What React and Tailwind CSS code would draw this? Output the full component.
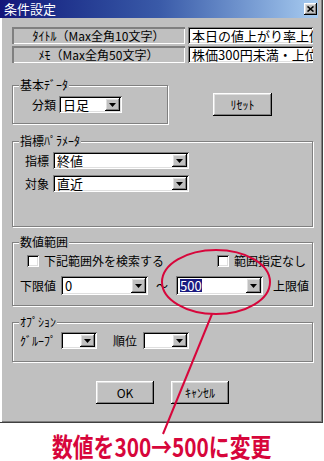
import React from "react";

const sunken =
  "shadow-[inset_1px_1px_0_#808080,inset_-1px_-1px_0_#ffffff,inset_2px_2px_0_#000000,inset_-2px_-2px_0_#dfdfdf]";
const raised =
  "shadow-[inset_-1px_-1px_0_#000000,inset_1px_1px_0_#ffffff,inset_-2px_-2px_0_#808080,inset_2px_2px_0_#dfdfdf]";

function Arrow() {
  return (
    <svg width="7" height="4" viewBox="0 0 7 4">
      <polygon points="0,0 7,0 3.5,4" fill="#000" />
    </svg>
  );
}

function Combo({ w, h = "h-[17px]", children }) {
  return (
    <div className={`flex ${w} ${h} bg-white ${sunken} p-[2px]`}>
      <div className="flex-1 flex items-center whitespace-nowrap pl-[2px] text-[13px] leading-[13px]">
        {children}
      </div>
      <div className={`w-[15px] bg-[#c0c0c0] ${raised} flex items-center justify-center`}>
        <Arrow />
      </div>
    </div>
  );
}

function Group({ label, className, children }) {
  return (
    <div
      className={`relative border border-[#808080] shadow-[inset_1px_1px_0_#ffffff,1px_1px_0_#ffffff] ${className}`}
    >
      <span className="absolute -top-[8px] left-[6px] bg-[#c0c0c0] px-[1px] text-[12px] leading-[14px]">
        {label}
      </span>
      {children}
    </div>
  );
}

function Button({ w, children }) {
  return (
    <div
      className={`${w} h-[23px] ${raised} flex items-center justify-center text-[12px]`}
    >
      {children}
    </div>
  );
}

function Check({ label, className }) {
  return (
    <div className={`flex items-center ${className}`}>
      <div className={`w-[12px] h-[12px] bg-white ${sunken}`} />
      <span className="ml-[5px] text-[12px] leading-[12px]">{label}</span>
    </div>
  );
}

const App = () => {
  return (
    <div
      className="relative w-[324px] h-[461px] bg-white text-black overflow-hidden"
      style={{ fontFamily: '"Noto Sans CJK JP", "Noto Sans", sans-serif' }}
    >
      {/* dialog */}
      <div className="w-[323px] h-[423px] bg-[#c0c0c0] flex flex-col border-r border-b border-[#404040] shadow-[inset_-1px_-1px_0_#808080]">
        {/* title bar */}
        <div className="h-[18px] mr-[4px] flex items-center justify-between bg-linear-to-r from-[#14147a] via-[#3a5aa8] to-[#a8ccf0]">
          <span className="pl-[4px] text-[13px] leading-[14px] text-white">条件設定</span>
          <div className={`mr-[1px] w-[13px] h-[12px] bg-[#c0c0c0] ${raised} flex items-center justify-center`}>
            <svg width="7" height="6" viewBox="0 0 7 6">
              <path d="M0.5 0.5 L6.5 5.5 M6.5 0.5 L0.5 5.5" stroke="#000" strokeWidth="1.6" />
            </svg>
          </div>
        </div>

        {/* body */}
        <div className="flex-1 flex flex-col border-l-2 border-l-white pl-[10px]">
          {/* title / memo rows */}
          <div className="mt-[9px] flex flex-col gap-[2px]">
            <div className="flex gap-[3px]">
              <div className="w-[173px] h-[17px] shadow-[inset_2px_2px_0_#808080,inset_-1px_-1px_0_#ffffff] flex items-center justify-center text-[12px]">
                ﾀｲﾄﾙ（Max全角10文字）
              </div>
              <div className={`w-[125px] h-[17px] bg-white ${sunken} pl-[4px] overflow-hidden whitespace-nowrap text-[13px] leading-[17px]`}>
                本日の値上がり率上位
              </div>
            </div>
            <div className="flex gap-[3px]">
              <div className="w-[173px] h-[17px] shadow-[inset_2px_2px_0_#808080,inset_-1px_-1px_0_#ffffff] flex items-center justify-center text-[12px]">
                ﾒﾓ（Max全角50文字）
              </div>
              <div className={`w-[125px] h-[17px] bg-white ${sunken} pl-[4px] overflow-hidden whitespace-nowrap text-[13px] leading-[17px]`}>
                株価300円未満・上位Ⅲ
              </div>
            </div>
          </div>

          {/* basic data + reset */}
          <div className="mt-[22px] flex items-start">
            <Group label="基本ﾃﾞｰﾀ" className="w-[156px] h-[39px]">
              <div className="pt-[10px] pl-[19px] flex items-center gap-[3px]">
                <span className="text-[12px] leading-[17px]">分類</span>
                <Combo w="w-[63px]">日足</Combo>
              </div>
            </Group>
            <div className="ml-[45px] mt-[8px]">
              <Button w="w-[59px]">ﾘｾｯﾄ</Button>
            </div>
          </div>

          {/* indicator parameters */}
          <Group label="指標ﾊﾟﾗﾒｰﾀ" className="mt-[17px] w-[301px] h-[86px]">
            <div className="pt-[10px] pl-[12px] flex flex-col gap-[6px]">
              <div className="flex items-center gap-[4px]">
                <span className="text-[12px] leading-[17px]">指標</span>
                <Combo w="w-[136px]">終値</Combo>
              </div>
              <div className="flex items-center gap-[4px]">
                <span className="text-[12px] leading-[17px]">対象</span>
                <Combo w="w-[136px]">直近</Combo>
              </div>
            </div>
          </Group>

          {/* numeric range */}
          <Group label="数値範囲" className="mt-[15px] w-[301px] h-[64px]">
            <div className="pt-[12px] pl-[14px] flex">
              <Check label="下記範囲外を検索する" className="w-[190px]" />
              <Check label="範囲指定なし" />
            </div>
            <div className="mt-[9px] pl-[7px] flex items-center">
              <span className="text-[12px] leading-[19px] w-[41px]">下限値</span>
              <Combo w="w-[87px]" h="h-[19px]">0</Combo>
              <span className="w-[28px] text-center text-[12px]">～</span>
              <Combo w="w-[87px]" h="h-[19px]">
                <span className="bg-[#1a1a80] text-white leading-[13px]">500</span>
              </Combo>
              <span className="ml-[10px] text-[12px] leading-[19px]">上限値</span>
            </div>
          </Group>

          {/* options */}
          <Group label="ｵﾌﾟｼｮﾝ" className="mt-[16px] w-[301px] h-[40px]">
            <div className="pt-[9px] pl-[7px] flex items-center">
              <span className="w-[41px] text-[12px] leading-[17px]">ｸﾞﾙｰﾌﾟ</span>
              <Combo w="w-[36px]"></Combo>
              <span className="ml-[16px] w-[30px] text-[12px] leading-[17px]">順位</span>
              <Combo w="w-[46px]"></Combo>
            </div>
          </Group>

          {/* buttons */}
          <div className="mt-[19px] ml-[84px] flex gap-[17px]">
            <Button w="w-[58px]">OK</Button>
            <Button w="w-[58px]">ｷｬﾝｾﾙ</Button>
          </div>
        </div>
      </div>

      {/* caption */}
      <div className="pl-[52px] mt-[10px] h-[27px] whitespace-nowrap">
        <span className="inline-block origin-left scale-x-[0.8] text-[26px] leading-[26px] font-bold text-[#d7063b]">
          数値を300→500に変更
        </span>
      </div>

      {/* red annotation ring over the dialog */}
      <svg
        className="absolute left-0 top-0 pointer-events-none"
        width="324"
        height="461"
        viewBox="0 0 324 461"
      >
        <ellipse cx="216" cy="282" rx="54" ry="32" fill="none" stroke="#d7063b" strokeWidth="2" />
        <line x1="212" y1="314" x2="163" y2="434" stroke="#d7063b" strokeWidth="2" />
      </svg>
    </div>
  );
};

export default App;
